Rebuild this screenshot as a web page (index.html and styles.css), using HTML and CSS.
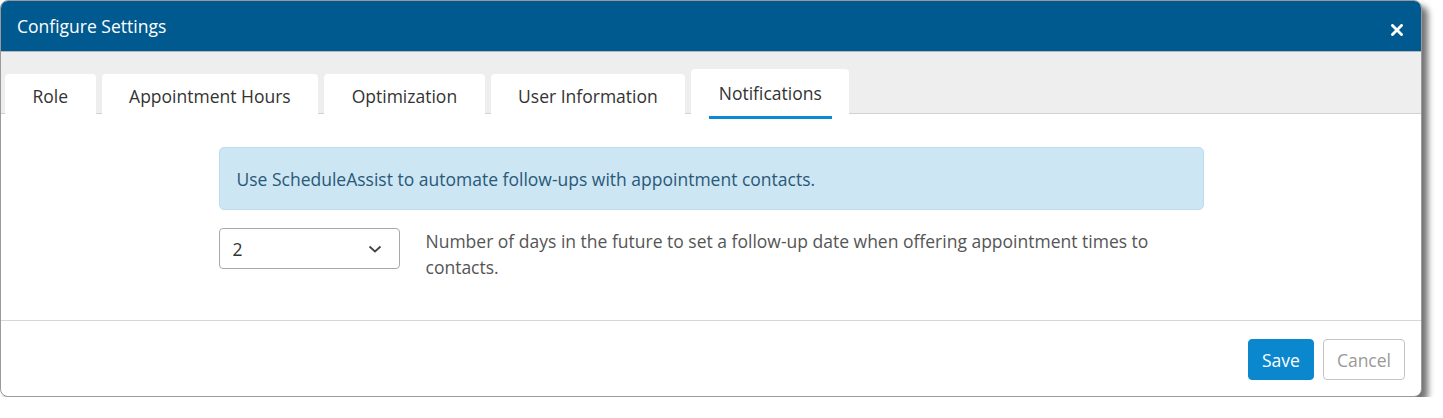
FILE: index.html
```html
<!DOCTYPE html>
<html lang="en">
<head>
<meta charset="utf-8">
<title>Configure Settings</title>
<link rel="stylesheet" href="styles.css">
</head>
<body>
<div class="dialog">
  <div class="header">
    <span class="title">Configure Settings</span>
    <button class="close" aria-label="Close">
      <svg width="12" height="12" viewBox="0 0 12 12"><path d="M1.5 1.5 L10.5 10.5 M10.5 1.5 L1.5 10.5" stroke="#fff" stroke-width="2.8" stroke-linecap="square"/></svg>
    </button>
  </div>
  <div class="tabs">
    <div class="tab">Role</div>
    <div class="tab">Appointment Hours</div>
    <div class="tab">Optimization</div>
    <div class="tab">User Information</div>
    <div class="tab tab-active"><span class="tab-label">Notifications</span></div>
  </div>
  <div class="content">
    <div class="inner">
      <div class="info">Use ScheduleAssist to automate follow-ups with appointment contacts.</div>
      <div class="row">
        <div class="select">
          <span>2</span>
          <svg width="14" height="8" viewBox="0 0 14 8"><path d="M1.5 1.5 L7 6.5 L12.5 1.5" fill="none" stroke="#444" stroke-width="1.8"/></svg>
        </div>
        <div class="desc">Number of days in the future to set a follow-up date when offering appointment times to contacts.</div>
      </div>
    </div>
  </div>
  <div class="footer">
    <button class="btn btn-primary">Save</button>
    <button class="btn btn-default">Cancel</button>
  </div>
</div>
</body>
</html>
```
FILE: styles.css
```css
html, body {
  margin: 0;
  padding: 0;
  background: #fff;
}
body {
  font-family: "Open Sans", "Liberation Sans", sans-serif;
  font-size: 17.5px;
  color: #333;
}
.dialog {
  width: 1422px;
  box-sizing: border-box;
  border: 1px solid #9a9a9a;
  border-radius: 8px;
  overflow: hidden;
  background: #fff;
  box-shadow: 6px 6px 6px rgba(0, 0, 0, 0.55);
}
.header {
  height: 50px;
  background: #005a8f;
  border-bottom: 1px solid #b8b8b8;
  display: flex;
  align-items: center;
  justify-content: space-between;
  padding: 0 16px 0 16px;
}
.title {
  color: #fff;
  line-height: 22px;
}
.close {
  background: none;
  border: 0;
  padding: 0;
  margin-top: 8px;
  margin-right: 2px;
  display: flex;
  cursor: pointer;
}
.tabs {
  height: 61px;
  background: #eeeeee;
  border-bottom: 1px solid #d2d2d2;
  display: flex;
  align-items: flex-end;
  gap: 6px;
  padding: 0 5px 0 4px;
}
.tab {
  height: 40px;
  margin-bottom: -1px;
  padding: 3px 27.5px 0;
  box-sizing: border-box;
  background: #fff;
  border-radius: 4px 4px 0 0;
  display: flex;
  align-items: center;
  line-height: 22px;
  color: #333;
  white-space: nowrap;
}
.tab-active {
  height: 50px;
  margin-bottom: -6px;
  padding: 0 17.5px;
  align-items: stretch;
}
.tab-label {
  display: block;
  padding: 13px 10px 0;
  border-bottom: 3px solid #0a8ad0;
}
.content {
  padding: 33px 0 40px;
}
.inner {
  width: 985px;
  margin: 0 auto;
}
.info {
  box-sizing: border-box;
  height: 63px;
  background: #cce6f4;
  border: 1px solid #bcdcef;
  border-radius: 5px;
  color: #2a5877;
  display: flex;
  align-items: center;
  padding: 0 17px;
  line-height: 22px;
}
.row {
  margin-top: 18px;
  display: flex;
  align-items: flex-start;
  gap: 26px;
}
.select {
  flex: 0 0 auto;
  width: 181px;
  height: 41px;
  box-sizing: border-box;
  border: 1px solid #a9a9a9;
  border-radius: 4px;
  display: flex;
  align-items: center;
  justify-content: space-between;
  padding: 0 17px 0 13px;
  color: #333;
}
.desc {
  line-height: 26px;
  color: #555;
}
.footer {
  border-top: 1px solid #d6d6d6;
  height: 76px;
  display: flex;
  justify-content: flex-end;
  align-items: flex-start;
  gap: 9px;
  padding: 18px 16px 0 0;
  box-sizing: border-box;
}
.btn {
  font-family: "Open Sans", "Liberation Sans", sans-serif;
  font-size: 17.5px;
  height: 41px;
  border-radius: 4px;
  padding: 0 13px;
  line-height: 22px;
  cursor: pointer;
}
.btn-primary {
  background: #0a87cd;
  border: 1px solid #0a87cd;
  color: #fff;
}
.btn-default {
  background: #fff;
  border: 1px solid #c4c4c4;
  color: #999;
}
```
